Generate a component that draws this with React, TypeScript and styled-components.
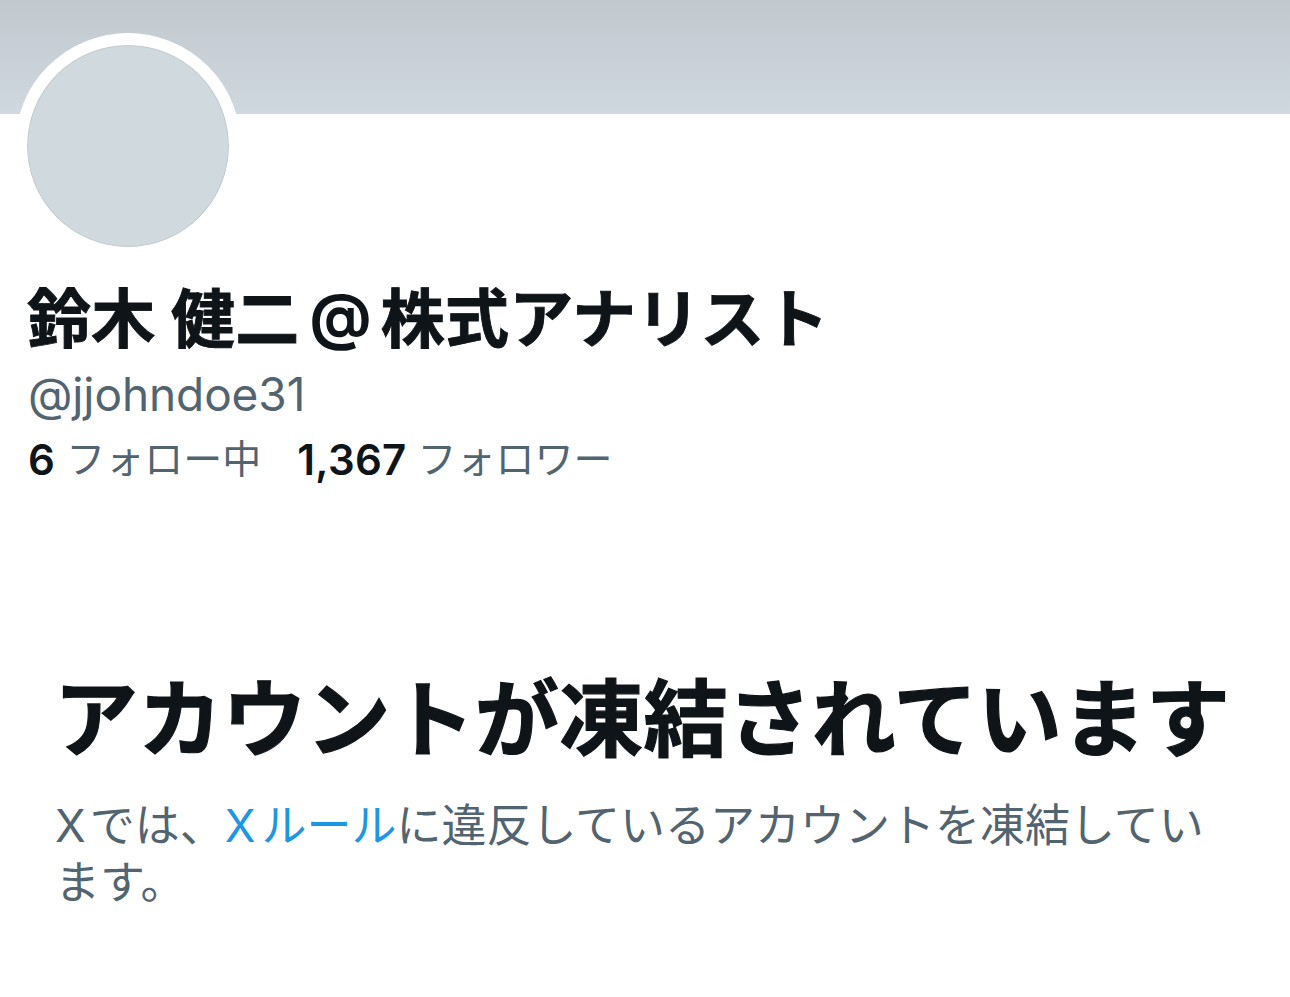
import styled, { createGlobalStyle } from "styled-components";

const GlobalStyle = createGlobalStyle`
  * {
    box-sizing: border-box;
  }
  body {
    margin: 0;
    background-color: #ffffff;
    color: #0f1419;
    font-family: Inter, "Noto Sans CJK JP", sans-serif;
  }
`;

const Page = styled.main`
  width: 100%;
  min-height: 997px;
  overflow: hidden;
`;
const Banner = styled.div`
  height: 114px;
  background-image: linear-gradient(to bottom, #c1c9cf, #cfd8de);
`;
const Avatar = styled.div`
  position: relative;
  width: 226px;
  height: 226px;
  margin: -81px 0 0 15px;
  border: 12px solid #ffffff;
  border-radius: 50%;
  background-color: #cfd9de;
  background-clip: padding-box;
  box-shadow: inset 0 0 0 1px #c2cbd0;
`;
const Profile = styled.header`
  padding: 22px 28px 0;
  white-space: nowrap;
`;
const Name = styled.h1`
  margin: 0 0 0 -1px;
  height: 78px;
  line-height: 76px;
  font-size: 64px;
  font-weight: 700;
  letter-spacing: 0.25px;
  -webkit-text-stroke: 0.9px #0f1419;
`;
const AtSign = styled.span`
  margin: 0 9px 0 10px;
  font-size: 61px;
  line-height: 1;
  vertical-align: 4px;
  -webkit-text-stroke: 0;
`;
const Handle = styled.div`
  height: 70px;
  line-height: 70px;
  font-size: 46px;
  letter-spacing: -0.1px;
  color: #536471;
`;
const Stats = styled.div`
  display: flex;
  gap: 36px;
  height: 60px;
  line-height: 62px;
`;
const Stat = styled.div`
  display: flex;
  gap: 11px;
  font-size: 39px;
  color: #536471;
`;
const Count = styled.span`
  font-size: 42px;
  font-weight: 600;
  letter-spacing: 0.3px;
  color: #0f1419;
`;
const Label = styled.span`
  line-height: 60px;
`;
const Notice = styled.section`
  padding: 171px 50px 0 56px;
`;
const NoticeTitle = styled.h2`
  margin: 0 0 0 -2px;
  height: 120px;
  line-height: 120px;
  font-size: 84px;
  font-weight: 700;
  letter-spacing: 0.2px;
  white-space: nowrap;
  -webkit-text-stroke: 1.2px #0f1419;
`;
const NoticeText = styled.p`
  margin: 17px 0 0 -1px;
  line-height: 57px;
  font-size: 45px;
  white-space: nowrap;
  color: #536471;
`;
const Latin = styled.span<{ $gap: number }>`
  margin-right: ${(props) => props.$gap}px;
`;
const RulesLink = styled.a`
  color: #1d96e3;
  text-decoration: none;
`;

const stats = [
  { count: "6", label: "フォロー中" },
  { count: "1,367", label: "フォロワー" },
];

function App() {
  return (
    <Page>
      <GlobalStyle />
      <Banner />
      <Avatar />
      <Profile>
        <Name>
          鈴木 健二<AtSign>@</AtSign>株式アナリスト
        </Name>
        <Handle>@jjohndoe31</Handle>
        <Stats>
          {stats.map((stat) => (
            <Stat key={stat.label}>
              <Count>{stat.count}</Count>
              <Label>{stat.label}</Label>
            </Stat>
          ))}
        </Stats>
      </Profile>
      <Notice>
        <NoticeTitle>アカウントが凍結されています</NoticeTitle>
        <NoticeText>
          <Latin $gap={4}>X</Latin>では、
          <RulesLink>
            <Latin $gap={6}>X</Latin>ルール
          </RulesLink>
          に違反しているアカウントを凍結してい
          <br />
          ます。
        </NoticeText>
      </Notice>
    </Page>
  );
}

export default App;
